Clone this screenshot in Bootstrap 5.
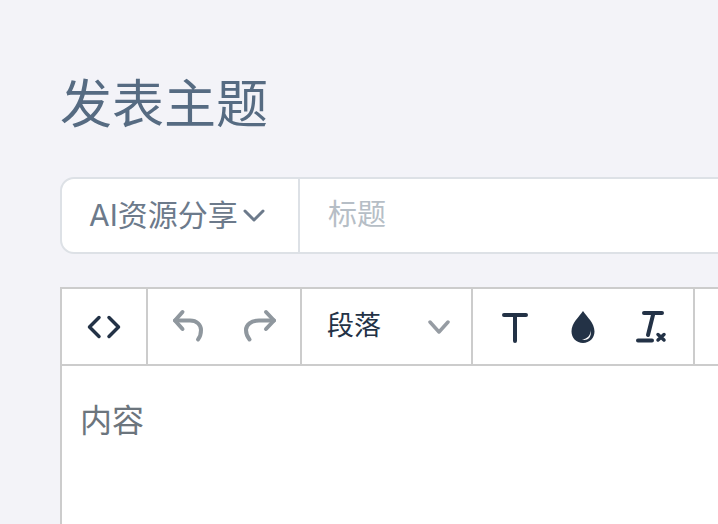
<!DOCTYPE html>
<html lang="zh">
<head>
  <meta charset="UTF-8">
  <title>发表主题</title>
  <link href="https://cdn.jsdelivr.net/npm/bootstrap@5.3.0/dist/css/bootstrap.min.css" rel="stylesheet">
  <style>
    html, body {
      height: 100%;
      overflow: hidden;
    }

    body {
      background: #f3f3f8;
      font-family: "Inter", "Noto Sans CJK SC", sans-serif;
    }

    .page-wrap {
      width: 1100px;
      padding: 73px 0 0 60px;
    }

    .page-title {
      font-size: 52px;
      line-height: 64px;
      font-weight: 400;
      color: #566b82;
      margin: 0 0 40px;
    }

    .topic-row {
      height: 77px;
      background: #fff;
      border: 2px solid #dde1e6;
      border-radius: 14px;
      margin-bottom: 33px;
    }

    .cat-select {
      width: 238px;
      padding-left: 27px;
      border-right: 2px solid #dde1e6;
      font-size: 30px;
      color: #6c7a8b;
      white-space: nowrap;
    }

    .cat-select svg {
      margin-left: 5px;
    }

    .title-input {
      border: 0;
      outline: 0;
      padding: 0 0 2px 28px;
      font-size: 29px;
      color: #333;
      background: transparent;
    }

    .title-input::placeholder {
      color: #b6bec6;
    }

    .editor-box {
      background: #fff;
      border: 2px solid #ccc;
      border-bottom: 0;
    }

    .tool-bar {
      height: 77px;
      border-bottom: 2px solid #ccc;
    }

    .tool-group {
      border-right: 2px solid #ccc;
    }

    .group-code { width: 86px; }
    .group-history { width: 154px; padding: 0 4px; }
    .group-format { width: 171px; padding: 0 21px 0 25px; }
    .group-text { width: 222px; padding: 0 8px; }

    .format-label {
      font-size: 27px;
      color: #233246;
    }

    .tool-btn {
      width: 68px;
    }

    .group-history .tool-btn {
      width: 72px;
    }

    .edit-body {
      padding: 32px 18px;
      font-size: 32px;
      line-height: 46px;
      color: #6c757d;
      height: 300px;
    }
  </style>
</head>
<body>

  <div class="page-wrap">
    <h1 class="page-title">发表主题</h1>

    <!-- 分类 + 标题 -->
    <div class="topic-row d-flex">
      <div class="cat-select d-flex align-items-center">
        <span>AI资源分享</span>
        <svg width="22" height="14" viewBox="0 0 22 14" fill="none" stroke="#6c7a8b" stroke-width="3" stroke-linecap="round" stroke-linejoin="round"><path d="M2 2l9 9 9-9"/></svg>
      </div>
      <input class="title-input flex-grow-1" type="text" placeholder="标题">
    </div>

    <!-- 编辑器 -->
    <div class="editor-box">
      <div class="tool-bar d-flex">
        <div class="tool-group group-code d-flex align-items-center justify-content-center">
          <svg width="36" height="24" viewBox="0 0 36 24" fill="none" stroke="#233246" stroke-width="3.500" stroke-linecap="round" stroke-linejoin="round"><path d="M13 2.500L3.500 12l9.500 9.500M23 2.500l9.500 9.500-9.500 9.500"/></svg>
        </div>
        <div class="tool-group group-history d-flex align-items-center">
          <div class="tool-btn d-flex justify-content-center">
            <svg width="34" height="36" viewBox="0 0 34 36" fill="none" stroke="#8f979e" stroke-width="4" stroke-linecap="round" stroke-linejoin="round"><path d="M11.500 3L4 11.500 11.500 20"/><path d="M4 11.500h15c7 0 11 4.500 11 9.500 0 4-1 7-3 9.500"/></svg>
          </div>
          <div class="tool-btn d-flex justify-content-center">
            <svg width="34" height="36" viewBox="0 0 34 36" fill="none" stroke="#8f979e" stroke-width="4" stroke-linecap="round" stroke-linejoin="round"><path d="M23 3l8 8.500-8 8.500"/><path d="M31 11.500H16C8 11.500 3 16 3 21c0 4 1.500 7 3.500 9.500"/></svg>
          </div>
        </div>
        <div class="tool-group group-format d-flex align-items-center justify-content-between">
          <span class="format-label">段落</span>
          <svg width="22" height="14" viewBox="0 0 22 14" fill="none" stroke="#969ca3" stroke-width="3.500" stroke-linecap="round" stroke-linejoin="round"><path d="M2 2l9 10 9-10"/></svg>
        </div>
        <div class="tool-group group-text d-flex align-items-center">
          <div class="tool-btn d-flex justify-content-center">
            <svg width="28" height="32" viewBox="0 0 28 32" fill="none" stroke="#233246" stroke-width="4" stroke-linecap="round"><path d="M3 4h22M14 4v26"/></svg>
          </div>
          <div class="tool-btn d-flex justify-content-center">
            <svg width="26" height="34" viewBox="0 0 26 34"><path fill="#233246" d="M13 1C9 7 1.500 13 1.500 21.500 1.500 28 6.500 33 13 33s11.500-5 11.500-11.500C24.500 13 17 7 13 1z"/><path fill="#fff" d="M20.500 20c.5 5-3 9-8.500 9.500 3.500 1.500 10.500-.5 8.500-9.500z"/></svg>
          </div>
          <div class="tool-btn d-flex justify-content-center">
            <svg width="32" height="34" viewBox="0 0 32 34" fill="none" stroke="#233246" stroke-linecap="round"><path stroke-width="4" d="M9 3h18M18.500 3L13 25M3 30.500h14"/><path stroke-width="3.500" d="M23 24.500l6 5.500M29 24.500L23 30"/></svg>
          </div>
        </div>
      </div>
      <div class="edit-body">内容</div>
    </div>
  </div>

</body>
</html>
